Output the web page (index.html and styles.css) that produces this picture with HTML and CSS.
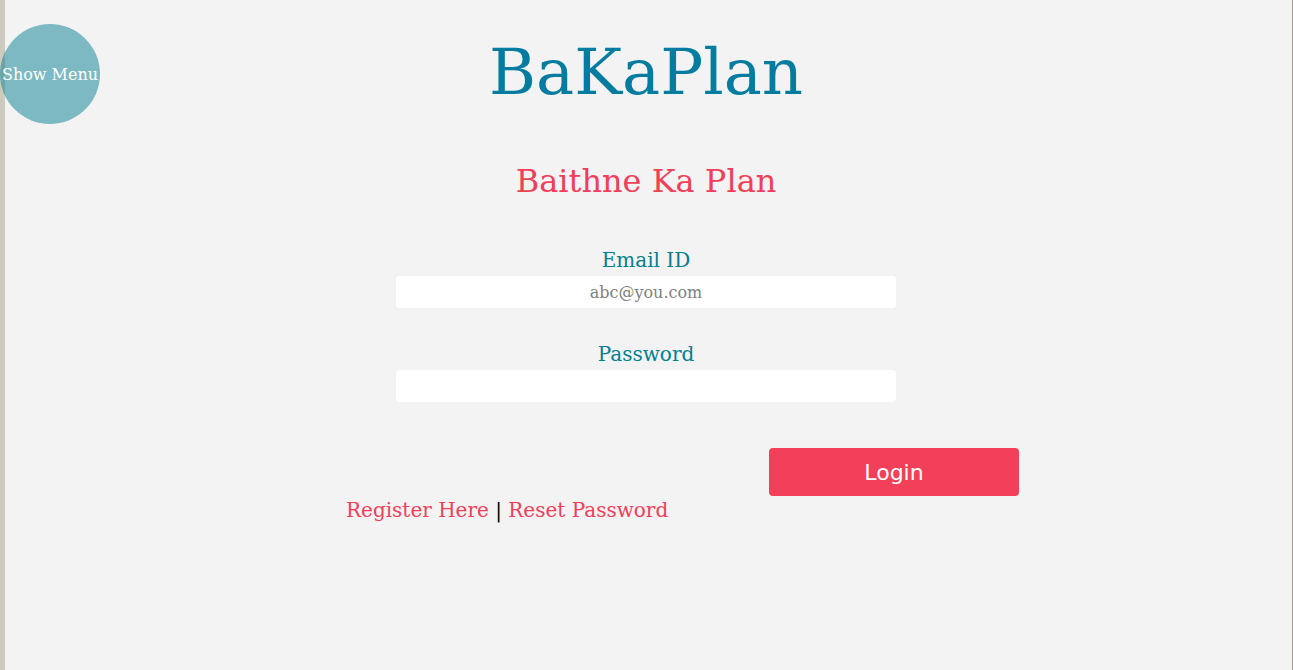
FILE: index.html
```html
<!DOCTYPE html>
<html lang="en">
<head>
<meta charset="utf-8">
<title>BaKaPlan</title>
<link rel="stylesheet" href="styles.css">
</head>
<body>
<button class="menu-toggle" type="button">Show Menu</button>
<main class="page">
  <h1 class="brand">BaKaPlan</h1>
  <h2 class="tagline">Baithne Ka Plan</h2>
  <form class="login-form">
    <label class="field-label" for="email">Email ID</label>
    <input class="field-input" id="email" type="email" placeholder="abc@you.com">
    <label class="field-label field-label--gap" for="password">Password</label>
    <input class="field-input" id="password" type="password" autofocus>
    <div class="actions">
      <button class="login-btn" type="button">Login</button>
    </div>
    <div class="links">
      <a class="link" href="#">Register Here</a> | <a class="link" href="#">Reset Password</a>
    </div>
  </form>
</main>
</body>
</html>
```

FILE: styles.css
```css
html, body {
  margin: 0;
  padding: 0;
}

body {
  min-height: 100vh;
  background: #f3f3f3;
  box-shadow: inset 5px 0 0 #cccbbd, inset -1px 0 0 #a39a8c;
  font-family: "DejaVu Serif", serif;
  color: #000;
}

.menu-toggle {
  position: absolute;
  top: 24px;
  left: 0;
  width: 100px;
  height: 100px;
  border: none;
  border-radius: 50%;
  background: rgba(8, 128, 145, 0.5);
  color: #fff;
  font-family: "DejaVu Serif", serif;
  font-size: 16px;
  padding: 0;
  white-space: nowrap;
  cursor: pointer;
}

.page {
  padding-top: 35px;
  padding-right: 1px;
  display: flex;
  flex-direction: column;
  align-items: center;
}

.brand {
  margin: 0;
  font-weight: normal;
  font-size: 64px;
  line-height: 75px;
  color: #037ca0;
}

.tagline {
  margin: 53px 0 0;
  font-weight: normal;
  font-size: 32px;
  line-height: 37px;
  color: #f04059;
}

.login-form {
  width: 600px;
  margin-top: 49px;
  display: flex;
  flex-direction: column;
  align-items: center;
}

.field-label {
  font-size: 20px;
  line-height: 23px;
  color: #00808e;
}

.field-label--gap {
  margin-top: 35px;
}

.field-input {
  margin-top: 4px;
  width: 500px;
  height: 32px;
  box-sizing: border-box;
  border: none;
  border-radius: 4px;
  background: #fff;
  text-align: center;
  font-family: "DejaVu Serif", serif;
  font-size: 16px;
  color: #000;
  outline: none;
  padding: 0 8px;
}

.field-input::placeholder {
  color: #808080;
}

.actions {
  align-self: stretch;
  margin-top: 46px;
}

.login-btn {
  display: block;
  margin-left: 423px;
  width: 250px;
  height: 48px;
  border: none;
  border-radius: 4px;
  background: #f2405a;
  color: #fff;
  font-family: "DejaVu Sans", sans-serif;
  font-size: 22px;
  cursor: pointer;
}

.links {
  align-self: stretch;
  margin-top: 3px;
  font-size: 20px;
  line-height: 23px;
}

.link {
  color: #f04059;
  text-decoration: none;
}
```
